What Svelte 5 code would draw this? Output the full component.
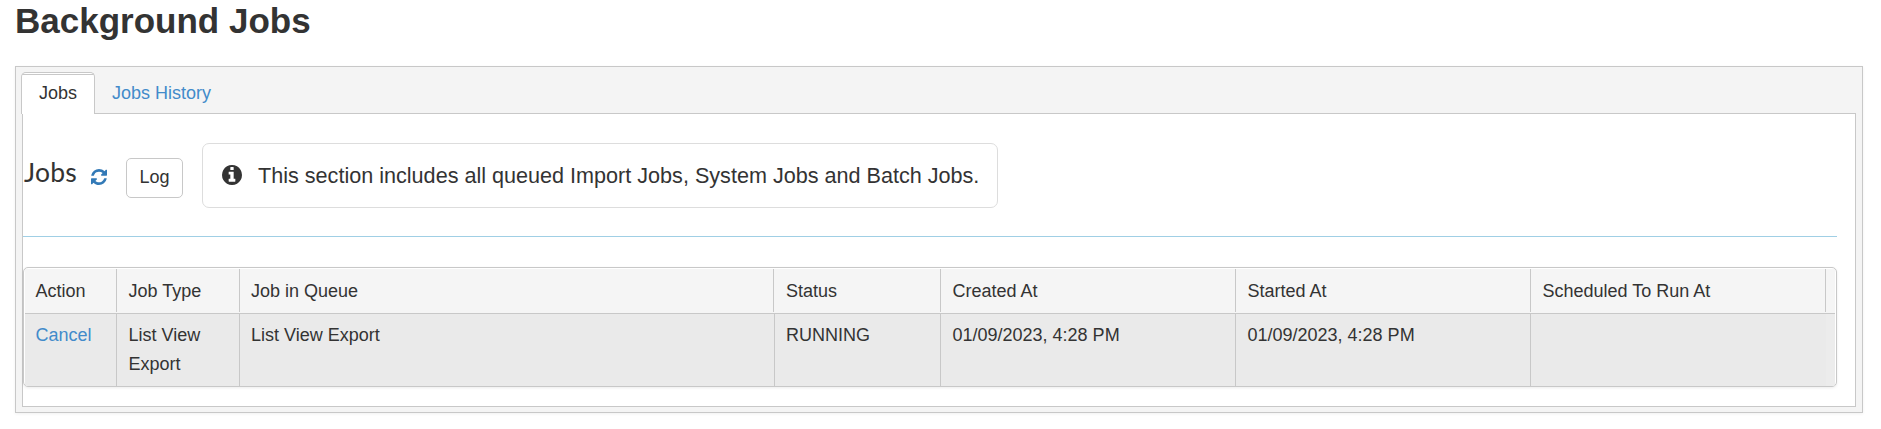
<script>
  const columns = ['Action', 'Job Type', 'Job in Queue', 'Status', 'Created At', 'Started At', 'Scheduled To Run At'];
  const job = ['Cancel', 'List View Export', 'List View Export', 'RUNNING', '01/09/2023, 4:28 PM', '01/09/2023, 4:28 PM', ''];
</script>

<main>
  <h1>Background Jobs</h1>
  <section class="tabs">
    <nav>
      <span class="tab active">Jobs</span>
      <a class="tab">Jobs History</a>
    </nav>
    <div class="panel">
      <header>
        <h2>Jobs</h2>
        <svg class="refresh" viewBox="0 0 1536 1536" width="16" height="16">
          <path fill="#337ab7" d="M1511 928q0 5-1 7-64 268-268 434.500T764 1536q-146 0-282.500-55T238 1324l-129 129q-19 19-45 19t-45-19-19-45V960q0-26 19-45t45-19h448q26 0 45 19t19 45-19 45l-137 137q71 66 161 102t187 36q134 0 250-65t186-179q11-17 53-117 8-23 30-23h192q13 0 22.500 9.500t9.500 22.500zm25-800v448q0 26-19 45t-45 19h-448q-26 0-45-19t-19-45 19-45l138-138Q969 256 768 256q-134 0-250 65T332 500q-11 17-53 117-8 23-30 23H50q-13 0-22.500-9.500T18 608v-7q65-268 270-434.500T768 0q146 0 284 55.500T1297 212l130-129q19-19 45-19t45 19 19 45z" />
        </svg>
        <button>Log</button>
        <div class="info">
          <svg viewBox="0 0 1536 1536" width="20" height="20">
            <path fill="#333" d="M1024 1248v-160q0-14-9-23t-23-9h-96V544q0-14-9-23t-23-9H544q-14 0-23 9t-9 23v160q0 14 9 23t23 9h96v320h-96q-14 0-23 9t-9 23v160q0 14 9 23t23 9h448q14 0 23-9t9-23zM896 352V192q0-14-9-23t-23-9H672q-14 0-23 9t-9 23v160q0 14 9 23t23 9h192q14 0 23-9t9-23zm640 416q0 209-103 385.500T1153.500 1433 768 1536t-385.500-103T103 1153.500 0 768t103-385.500T382.500 103 768 0t385.500 103T1433 382.500 1536 768z" />
          </svg>
          <span>This section includes all queued Import Jobs, System Jobs and Batch Jobs.</span>
        </div>
      </header>
      <div class="rule"></div>
      <div class="grid">
        <div class="row head">
          {#each columns as c}<div>{c}</div>{/each}
          <div></div>
        </div>
        <div class="row body">
          {#each job as v, i}<div>{#if i === 0}<a>{v}</a>{:else}{v}{/if}</div>{/each}
          <div></div>
        </div>
      </div>
    </div>
  </section>
</main>

<style>
  :global(body) { background: #fff; overflow: hidden; }
  main { height: 429px; padding: 0 18px 0 15px; box-sizing: border-box; color: #333; font: 18px/29px "Liberation Sans", Arial, sans-serif; }
  h1 { margin: 0; height: 66px; font-size: 35px; line-height: 42px; font-weight: 700; }
  .tabs { height: 347px; box-sizing: border-box; display: flex; flex-direction: column; border: 1px solid #c8c8c8; background: #f4f4f4; padding: 5px 6px 5px 5px; box-shadow: 0 1px 3px rgba(0, 0, 0, .06); }
  nav { display: flex; height: 42px; margin-bottom: -1px; position: relative; }
  .tab { box-sizing: border-box; width: 74px; height: 41px; padding-top: 6px; text-align: center; }
  .tab.active { height: 42px; border: 1px solid #c8c8c8; border-bottom: 0; border-radius: 5px 5px 0 0; background: linear-gradient(#fff 1px, #c8c8c8 1px, #c8c8c8 2px, #fff 2px); }
  a { color: #428bca; }
  nav a.tab { width: auto; padding: 7px 17px 0; }
  .panel { flex: 1; margin-left: 1px; box-sizing: border-box; border: 1px solid #c8c8c8; background: #fff; padding: 29px 18px 0 0; }
  header { display: flex; height: 65px; }
  h2 { margin: 0; padding: 13px 0 0 1px; width: 68px; box-sizing: border-box; font: 400 26.500px/32px Lato, sans-serif; letter-spacing: .2px; }
  .refresh { margin: 26px 19px 0 0; }
  button { width: 57px; height: 40px; margin: 15px 19px 0 0; padding: 0 0 2px; border: 1px solid #c8c8c8; border-radius: 5px; background: #fff; color: #333; font: 18px "Liberation Sans", Arial, sans-serif; }
  .info { box-sizing: border-box; width: 796px; height: 65px; border: 1px solid #ddd; border-radius: 7px; display: flex; align-items: center; padding: 0 0 2px 19px; white-space: nowrap; font-size: 21.600px; }
  .info svg { margin-right: 16px; }
  .info span { padding-top: 1px; }
  .rule { height: 1px; margin: 28px 0 30px; background: #a0cfe5; }
  .grid { box-sizing: border-box; height: 120px; border: 1px solid #c8c8c8; border-radius: 5px; padding: 1px 1px 0; background: #fff; box-shadow: 0 1px 3px rgba(0, 0, 0, .08); overflow: hidden; }
  .row { display: grid; grid-template-columns: 92px 123px 534px 167px 295px 295px 295px 1fr; }
  .row > div { box-sizing: border-box; padding-left: 11.500px; border-right: 1px solid #c8c8c8; }
  .row > div:first-child { padding-left: 10.500px; }
  .row > div:nth-child(3) { padding-left: 11px; }
  .row > div:last-child { border: 0; padding: 0; }
  .head { height: 45px; box-sizing: border-box; background: #f5f5f5; border-bottom: 1px solid #c8c8c8; }
  .head > div { height: 43px; padding-top: 8px; }
  .head > div:nth-child(4) { padding-left: 12px; }
  .body { height: 72px; background: #eaeaea; grid-template-columns: 92px 123px 535px 166px 295px 295px 295px 1fr; }
  .body > div { padding-top: 7px; padding-right: 20px; }
  .body > div:nth-child(4) { padding-left: 11px; }
  .body > div:nth-child(7) { border: 0; }
  .body > div:last-child { background: #ececec; }
</style>
